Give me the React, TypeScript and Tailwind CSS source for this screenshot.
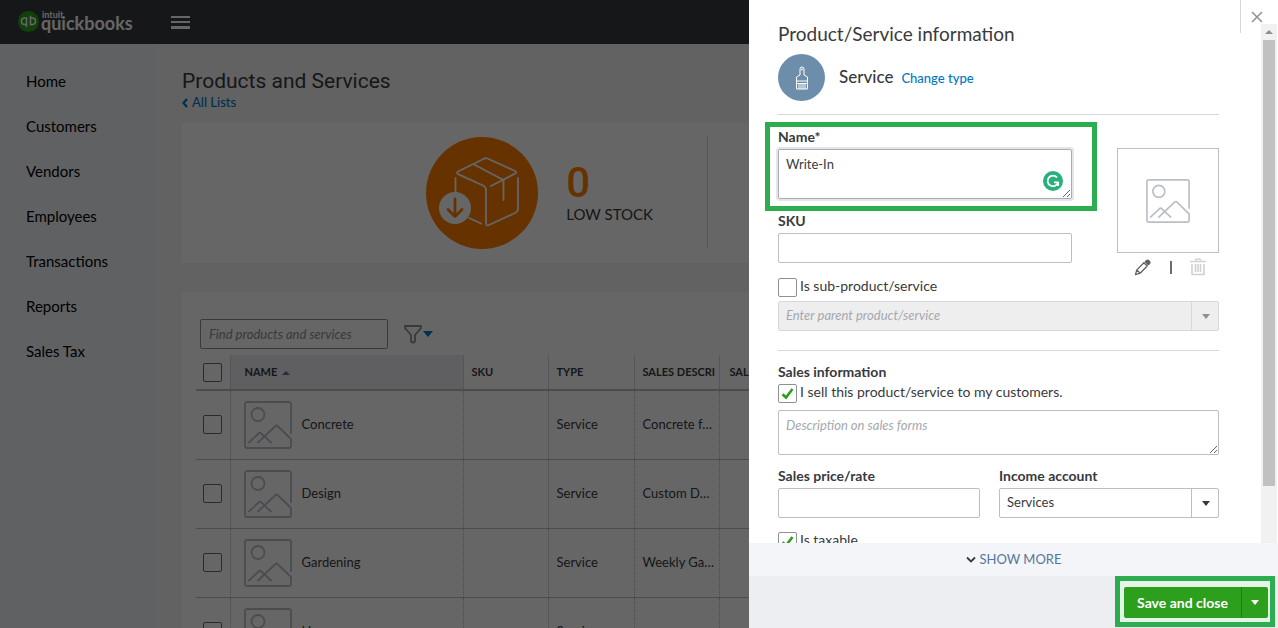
import React from "react";

const navItems = ["Home", "Customers", "Vendors", "Employees", "Transactions", "Reports", "Sales Tax"];

const products = [
  { name: "Concrete", type: "Service", description: "Concrete for fountain" },
  { name: "Design", type: "Service", description: "Custom Design" },
  { name: "Gardening", type: "Service", description: "Weekly Gardening" },
  { name: "Hours", type: "Service", description: "" },
];

function PictureIcon({ className }: { className: string }) {
  return (
    <svg viewBox="0 0 48 48" fill="none" stroke="currentColor" strokeWidth="1.8" strokeLinecap="round" strokeLinejoin="round" className={className} aria-hidden="true">
      <path d="M47 32V3a2 2 0 0 0-2-2H3a2 2 0 0 0-2 2v42a2 2 0 0 0 2 2h42a2 2 0 0 0 2-2v-7L33.500 25a1.500 1.500 0 0 0-2 0L14 41.500" />
      <circle cx="14" cy="13.500" r="6.500" />
      <path d="M5 41.500 14.500 32.500a2 2 0 0 1 2.800 0L27 41.500" />
    </svg>
  );
}

function Logo() {
  return (
    <div className="flex items-center gap-[2px] pb-[2px]">
      <svg viewBox="0 0 42 42" className="size-[21px]" aria-hidden="true">
        <circle cx="21" cy="21" r="21" fill="#2ca01c" />
        <g fill="none" stroke="#fff" strokeWidth="3">
          <path d="M18 14h-4.500a6.500 6.500 0 0 0 0 13H18M17 12.500V32" />
          <path d="M24 27h4.500a6.500 6.500 0 0 0 0-13H24M25 29V9.500" />
        </g>
      </svg>
      <div className="flex flex-col pb-[3px] text-white">
        <span className="pl-px text-[9px] leading-[6px] font-bold">intuit</span>
        <span className="text-[18px] leading-[10px] font-bold">quickbooks</span>
      </div>
    </div>
  );
}

function BoxIcon() {
  return (
    <svg viewBox="0 0 112 112" className="size-28" fill="none" strokeLinecap="round" strokeLinejoin="round" aria-hidden="true">
      <circle cx="56" cy="56" r="56" fill="#ff8000" />
      <g stroke="#fff" strokeWidth="1.800">
        <path d="M58.500 21.500 32 34.500q-2 1.200 0 2.600L57 48.500q3 1.500 3 4.500V86q0 3.500 3 2l26-12q3-1.500 3-4.500V41" />
        <path d="M58.500 21.500q1.500-.6 3 0L89 34q2.500 1.300 0 2.600L65 49" />
        <path d="M48 27.500 77.500 43v20M29.500 41v14M43 81l12 5.500" />
      </g>
      <circle cx="29" cy="71" r="16" fill="#fff" />
      <path d="M29 62v17M22 72.500l7 7 7-7" stroke="#ff8000" strokeWidth="2.800" />
    </svg>
  );
}

function SquareBox({ id, label, checked = false }: { id: string; label: string; checked?: boolean }) {
  return (
    <div className="flex gap-[3px]">
      <span className="grid size-[19px] shrink-0">
        <input id={id} type="checkbox" defaultChecked={checked} className="peer col-start-1 row-start-1 size-[19px] appearance-none rounded-[2px] border border-[#8d9096] bg-white" />
        <svg viewBox="0 0 19 19" className="pointer-events-none invisible col-start-1 row-start-1 peer-checked:visible" aria-hidden="true">
          <path d="M4.500 10.200 8 13.500 14.500 5" fill="none" stroke="#2ca01c" strokeWidth="2.600" />
        </svg>
      </span>
      <label htmlFor={id} className="text-[14px] leading-4">{label}</label>
    </div>
  );
}

function RowCheckbox({ label }: { label: string }) {
  return <input type="checkbox" aria-label={label} className="ml-[7px] block size-[19px] appearance-none rounded-[2px] border border-[#6b6c72]" />;
}

function Sidebar() {
  return (
    <nav className="w-[155px] shrink-0 bg-[#f1f2f6] pt-[15px]">
      <ul>
        {navItems.map((item) => (
          <li key={item}>
            <a href="#" className="flex h-[45px] items-center pl-[26px] text-[15px] text-black">{item}</a>
          </li>
        ))}
      </ul>
    </nav>
  );
}

function StockSummary() {
  return (
    <section className="mt-[13px] flex h-[140px] items-center bg-white">
      <div className="flex flex-1 items-center justify-end gap-7 pr-[54px]">
        <BoxIcon />
        <div>
          <p className="font-[Roboto] text-[42px] leading-[42px] font-medium text-[#ff8000]">0</p>
          <p className="text-[15px] leading-5">LOW STOCK</p>
        </div>
      </div>
      <div className="h-28 w-[42px] border-l border-[#d4d7dc]" />
    </section>
  );
}

function ProductTable() {
  return (
    <table className="w-[603px] table-fixed border-collapse text-left">
      <colgroup>
        <col className="w-[34px]" />
        <col className="w-[233px]" />
        <col className="w-[85px]" />
        <col className="w-[86px]" />
        <col className="w-[85px]" />
        <col className="w-20" />
      </colgroup>
      <thead>
        <tr className="h-[35px] border-b-2 border-[#babec5] text-[11px] font-bold">
          <th><RowCheckbox label="Select all" /></th>
          <th className="border-x border-[#d4d7dc] bg-[#ededf2] pl-[14px]">
            NAME <span className="ml-[2px] inline-block border-x-[4px] border-b-[4px] border-x-transparent border-b-[#55779b] align-middle" />
          </th>
          <th className="border-r border-[#d4d7dc] pl-2">SKU</th>
          <th className="border-r border-[#d4d7dc] pl-2">TYPE</th>
          <th className="overflow-hidden border-r border-[#d4d7dc] pl-2 whitespace-nowrap">SALES DESCRI</th>
          <th className="overflow-hidden pl-[10px] whitespace-nowrap">SAL</th>
        </tr>
      </thead>
      <tbody className="text-[13px]">
        {products.map((product) => (
          <tr key={product.name} className="h-[69px] border-b border-[#babec5]">
            <td><RowCheckbox label={`Select ${product.name}`} /></td>
            <td className="border-x border-dotted border-x-[#babec5] pl-[13px]">
              <span className="flex items-center gap-[10px]">
                <PictureIcon className="size-12 text-[#babec5]" />
                {product.name}
              </span>
            </td>
            <td className="border-r border-dotted border-r-[#babec5]" />
            <td className="border-r border-dotted border-r-[#babec5] pl-2">{product.type}</td>
            <td className="truncate border-r border-dotted border-r-[#babec5] pr-1 pl-2">{product.description}</td>
            <td />
          </tr>
        ))}
      </tbody>
    </table>
  );
}

function ListPage() {
  return (
    <div className="relative flex min-w-0 flex-1 flex-col overflow-hidden text-[#393a3d]">
      <header className="flex h-11 shrink-0 items-center bg-[#393a3d] pl-[18px]">
        <Logo />
        <button aria-label="Menu" className="ml-[38px] flex w-[19px] flex-col gap-[3px]">
          <span className="h-[2px] bg-white" />
          <span className="h-[2px] bg-white" />
          <span className="h-[3px] bg-white" />
        </button>
      </header>
      <div className="flex min-h-0 flex-1">
        <Sidebar />
        <main className="min-w-0 flex-1 overflow-hidden bg-[#f4f5f8] pl-[27px]">
          <h1 className="pt-[24px] pb-px font-[Roboto] text-[21px] leading-[26px]">Products and Services</h1>
          <a href="#" className="flex h-[15px] items-center gap-1 text-[13px] font-medium text-[#0077c5]">
            <svg viewBox="0 0 6 10" className="h-[10px] w-[6px]" aria-hidden="true"><path d="M5 1 1.500 5 5 9" fill="none" stroke="currentColor" strokeWidth="2.200" /></svg>
            All Lists
          </a>
          <StockSummary />
          <section className="mt-[29px] bg-white pt-[27px] pl-[14px]">
            <div className="mb-[6px] flex items-center gap-[15px] pl-1">
              <input aria-label="Find products and services" placeholder="Find products and services" className="h-[30px] w-[188px] rounded-[2px] border border-[#8d9096] px-2 text-[13px] italic placeholder:text-[#8d9096]" />
              <button aria-label="Filter" className="flex items-center">
                <svg viewBox="0 0 20 20" className="size-5" fill="none" stroke="#8d9096" strokeWidth="1.800" strokeLinejoin="round" aria-hidden="true">
                  <path d="M2 2h16v2l-6 7v6.500q-2 2-4 0V11L2 4z" />
                </svg>
                <span className="border-x-[5px] border-t-[6px] border-x-transparent border-t-[#0077c5]" />
              </button>
            </div>
            <ProductTable />
          </section>
        </main>
      </div>
      <div className="absolute inset-0 bg-black/60" />
    </div>
  );
}

function ItemPicture() {
  return (
    <div className="w-[102px] pt-5">
      <div className="flex h-[105px] items-center justify-center border border-[#babec5]">
        <PictureIcon className="size-[44px] text-[#babec5]" />
      </div>
      <div className="mt-[5px] flex items-center justify-between pr-[13px] pl-[17px]">
        <button aria-label="Edit picture">
          <svg viewBox="0 0 18 18" className="size-[17px]" fill="none" stroke="#5f6166" strokeWidth="1.400" strokeLinejoin="round" aria-hidden="true">
            <path d="M1.500 16.500 3 11.500 10.500 4l3.500 3.500L6.500 15zM3 11.500 6.500 15" />
            <path d="M12 3q1.800-2.800 4-1t-.8 4z" fill="#5f6166" />
          </svg>
        </button>
        <span className="h-[13px] w-[2px] bg-[#6b6c72]" />
        <button aria-label="Delete picture" disabled>
          <svg viewBox="0 0 16 18" className="h-[18px] w-4" fill="none" stroke="#cfd1d6" strokeWidth="1.600" aria-hidden="true">
            <path d="M0 3.500h16M5 2q3-2 6 0M2 6v10.500h12V6M5.500 6v8M8 6v8M10.500 6v8" />
          </svg>
        </button>
      </div>
    </div>
  );
}

const labelClass = "block text-[14px] leading-[18px] font-bold";
const fieldClass = "block h-[30px] w-full rounded-[2px] border border-[#babec5] bg-white px-[7px] text-[13px]";

function ProductForm() {
  return (
    <form className="pr-[59px] pb-8 pl-[29px]">
      <h2 className="pt-[22px] text-[19px] leading-6">Product/Service information</h2>
      <div className="mt-2 flex items-center border-b border-[#d4d7dc] pb-[13px]">
        <span className="flex size-[47px] items-center justify-center rounded-full bg-[#6c8eab]">
          <svg viewBox="0 0 14 24" className="h-6 w-[14px]" fill="none" stroke="#fff" strokeWidth="1" aria-hidden="true">
            <path d="M5 9V3a2 2 0 0 1 4 0v6l3.500 2v12h-11V11zM1.500 15h11M4 17v6M6 17v6M8 17v6M10 17v6M1.500 17.500h11" />
            <circle cx="7" cy="3.500" r=".6" />
          </svg>
        </span>
        <span className="ml-[14px] flex items-baseline gap-2">
          <span className="text-[17px] leading-6 font-medium">Service</span>
          <a href="#" className="text-[13px] leading-6 font-medium text-[#0077c5]">Change type</a>
        </span>
      </div>

      <div className="mt-[13px] flex justify-between">
        <div className="w-[294px]">
          <div className="relative">
            <label htmlFor="name" className={labelClass}>Name*</label>
            <textarea id="name" defaultValue="Write-In" className="mt-[3px] block h-[50px] w-full rounded-[2px] border border-[#a9acb3] bg-white px-[7px] py-[5px] text-[13px] leading-[18px] ring-2 ring-[#e3e5e8]" />
            <span className="absolute right-[9px] bottom-2 flex size-5 items-center justify-center rounded-full bg-[#26b07b]">
              <svg viewBox="0 0 20 20" className="size-5" fill="none" stroke="#fff" strokeWidth="1.800" aria-hidden="true">
                <path d="M14 6.500A5.300 5.300 0 1 0 15 11.500M11 11.300h4.800M15.200 11v4" />
              </svg>
            </span>
            <div className="pointer-events-none absolute -top-[6px] -right-[25px] -bottom-3 -left-[13px] border-[5px] border-[#2bad50]" />
          </div>
          <label htmlFor="sku" className="mt-[13px] block text-[14px] leading-[18px] font-bold">SKU</label>
          <input id="sku" className={`mt-[3px] ${fieldClass}`} />
          <div className="mt-[15px]">
            <SquareBox id="sub-product" label="Is sub-product/service" />
          </div>
        </div>
        <ItemPicture />
      </div>

      <div className="relative mt-1">
        <select disabled aria-label="Parent product/service" className="block h-[30px] w-full appearance-none rounded-[2px] border border-[#d4d7dc] bg-[#eeeeee] px-[7px] text-[13px] text-[#a5a8ae] italic opacity-100">
          <option>Enter parent product/service</option>
        </select>
        <span className="pointer-events-none absolute inset-y-0 right-0 flex w-7 items-center justify-center border-l border-[#d4d7dc]">
          <span className="border-x-[4px] border-t-[5px] border-x-transparent border-t-[#8d9096]" />
        </span>
      </div>

      <div className="mt-[19px] border-t border-[#d4d7dc] pt-3">
        <h3 className={labelClass}>Sales information</h3>
        <div className="mt-[3px]">
          <SquareBox id="sell" label="I sell this product/service to my customers." checked />
        </div>
        <textarea aria-label="Description on sales forms" placeholder="Description on sales forms" className="mt-[7px] block h-[45px] w-full rounded-[2px] border border-[#babec5] px-[7px] py-[5px] text-[13px] leading-[18px] placeholder:text-[#a5a8ae] placeholder:italic" />
      </div>

      <div className="mt-3 flex gap-[19px]">
        <div className="w-[202px]">
          <label htmlFor="price" className={labelClass}>Sales price/rate</label>
          <input id="price" className={`mt-[3px] ${fieldClass}`} />
        </div>
        <div className="flex-1">
          <label htmlFor="income" className={labelClass}>Income account</label>
          <div className="relative mt-[3px]">
            <select id="income" className="block h-[30px] w-full appearance-none rounded-[2px] border border-[#babec5] bg-white px-[7px] text-[13px]">
              <option>Services</option>
            </select>
            <span className="pointer-events-none absolute inset-y-0 right-0 flex w-7 items-center justify-center border-l border-[#babec5]">
              <span className="border-x-[4px] border-t-[5px] border-x-transparent border-t-[#393a3d]" />
            </span>
          </div>
        </div>
      </div>

      <div className="mt-[14px]">
        <SquareBox id="taxable" label="Is taxable" checked />
      </div>
    </form>
  );
}

function Drawer() {
  return (
    <aside className="relative flex w-[529px] shrink-0 flex-col bg-white text-[#393a3d]">
      <div className="min-h-0 flex-1 overflow-hidden">
        <ProductForm />
      </div>
      <div className="absolute top-0 right-0 flex h-[33px] w-[38px] border-l border-[#d4d7dc] pt-[11px] pl-[10px]">
        <button aria-label="Close" className="size-3">
          <svg viewBox="0 0 12 12" className="size-3" stroke="#8d9096" strokeWidth="1.500" aria-hidden="true"><path d="M1 1l10 10M11 1 1 11" /></svg>
        </button>
      </div>
      <div className="absolute top-6 right-px bottom-[85px] flex w-4 flex-col items-center bg-[#f1f1f1]">
        <span className="mt-[6px] mb-[6px] border-x-[4px] border-b-[4px] border-x-transparent border-b-[#8d9096]" />
        <span className="h-[86%] w-3 bg-[#c1c1c1]" />
      </div>
      <button className="flex h-[33px] shrink-0 items-center justify-center gap-1 bg-[#f4f5f8] text-[13px] text-[#55779b]">
        <svg viewBox="0 0 10 8" className="h-2 w-[10px]" fill="none" stroke="#393a3d" strokeWidth="1.800" aria-hidden="true"><path d="M1 1.500 5 5.500 9 1.500" /></svg>
        SHOW MORE
      </button>
      <footer className="flex h-[52px] shrink-0 justify-end bg-[#eceef1] pr-[3px]">
        <div className="flex h-[51px] border-[5px] border-[#2bad50] bg-[#e4f4e6] pt-[6px] pr-[2px] pb-1 pl-1">
          <button className="w-[118px] rounded-l-[2px] border-r border-[#1f7f14] bg-[#2ca01c] text-[14px] font-bold text-white">Save and close</button>
          <button aria-label="More save options" className="flex w-[26px] items-center justify-center rounded-r-[2px] bg-[#2ca01c]">
            <span className="border-x-[4px] border-t-[5px] border-x-transparent border-t-white" />
          </button>
        </div>
      </footer>
    </aside>
  );
}

export default function App() {
  return (
    <div className="flex h-screen overflow-hidden bg-white font-[Lato,sans-serif]">
      <ListPage />
      <Drawer />
    </div>
  );
}
